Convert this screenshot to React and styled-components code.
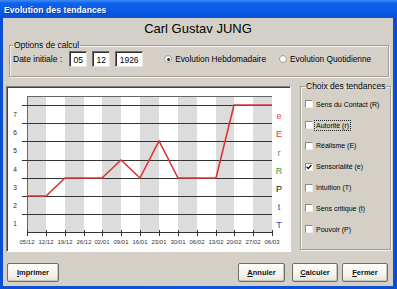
import React from "react";
import styled, { createGlobalStyle } from "styled-components";

const Global = createGlobalStyle`
  html, body { margin: 0; padding: 0; }
  body {
    width: 397px; height: 289px; overflow: hidden;
    font-family: "Liberation Sans", Arial, sans-serif;
    background: #fff;
  }
  * { box-sizing: border-box; }
`;

const Window = styled.div`
  width: 397px;
  height: 289px;
  display: flex;
  flex-direction: column;
  background: linear-gradient(to right, #0a4ed2, #0b55e0 50%, #0a4ed2);
`;

const TitleBar = styled.div`
  height: 18px;
  display: flex;
  align-items: center;
  padding-left: 4px;
  padding-top: 1px;
  color: #fff;
  font-weight: bold;
  font-size: 8.5px;
  letter-spacing: 0.1px;
  background: linear-gradient(to bottom, #3c8cf7 0%, #0f62ec 18%, #0a5ae6 60%, #0a50d8 100%);
  text-shadow: 1px 1px 0 #0a3aa0;
`;

const Client = styled.div`
  flex: 1;
  margin: 0 4px 3px 3px;
  background: #d4d0c8;
  display: flex;
  flex-direction: column;
  color: #000;
`;

const NameRow = styled.div`
  height: 20px;
  display: flex;
  align-items: center;
  justify-content: center;
  font-size: 13px;
  padding-top: 1px;
`;

const Group = styled.fieldset`
  margin: ${(p) => p.$margin};
  padding: ${(p) => p.$padding};
  border: 1px solid #a09d95;
  box-shadow: inset 1px 1px 0 #f4f2ee, 1px 1px 0 #f4f2ee;
  min-width: 0;
  width: ${(p) => p.$width || "auto"};
  height: ${(p) => p.$height || "auto"};
`;

const Legend = styled.legend`
  font-size: 8.5px;
  line-height: 10px;
  padding: 0 1px;
  margin-left: ${(p) => p.$offset || 0}px;
`;

const OptionsRow = styled.div`
  display: flex;
  align-items: center;
  height: 16px;
  font-size: 8.5px;
`;

const FieldLabel = styled.span`
  margin-right: 7px;
`;

const Inputs = styled.div`
  display: flex;
  gap: 5px;
`;

const NumBox = styled.div`
  width: ${(p) => p.$w}px;
  height: 16px;
  background: #fff;
  border: 1px solid;
  border-color: #6e6e6e #e8e6e0 #e8e6e0 #6e6e6e;
  box-shadow: inset 1px 1px 0 #303030;
  display: flex;
  align-items: center;
  justify-content: center;
  font-size: 8.5px;
  padding-top: 1px;
`;

const Radios = styled.div`
  display: flex;
  align-items: center;
  gap: 13px;
  margin-left: 21px;
`;

const RadioItem = styled.label`
  display: flex;
  align-items: center;
  gap: 3px;
  font-size: 8.3px;
`;

const RadioDot = styled.span`
  width: 8px;
  height: 8px;
  border-radius: 50%;
  background: #fff;
  border: 1px solid #9a9a9a;
  display: flex;
  align-items: center;
  justify-content: center;
  &::after {
    content: "";
    width: 3px;
    height: 3px;
    border-radius: 50%;
    background: ${(p) => (p.$on ? "#222" : "transparent")};
  }
`;

const Middle = styled.div`
  display: flex;
  align-items: flex-start;
  margin: 4px 2px 0 3px;
  gap: 9px;
  height: 171px;
`;

const ChartPanel = styled.div`
  margin-top: 5px;
  width: 285px;
  height: 166px;
  background: #fff;
  border: 1px solid;
  border-color: #808080 #fdfdfd #fdfdfd #808080;
  box-shadow: inset 1px 1px 0 #404040;
`;

const CheckList = styled.div`
  display: flex;
  flex-direction: column;
  padding-top: 3px;
`;

const CheckRow = styled.div`
  height: 20.8px;
  display: flex;
  align-items: center;
  gap: 2px;
  font-size: 7px;
`;

const Box = styled.span`
  width: 8px;
  height: 8px;
  background: #fff;
  border: 1px solid;
  border-color: #8a8a8a #eeeeee #eeeeee #8a8a8a;
  display: flex;
  align-items: center;
  justify-content: center;
  flex: none;
`;

const CheckText = styled.span`
  padding: 0 1px;
  line-height: 9px;
  outline: ${(p) => (p.$focus ? "1px dotted #222" : "none")};
`;

const ButtonRow = styled.div`
  display: flex;
  align-items: center;
  margin: 11px 5px 4px 4px;
  height: 19px;
`;

const Spacer = styled.div`
  flex: 1;
`;

const Button = styled.button`
  width: ${(p) => p.$w}px;
  height: 19px;
  margin-left: ${(p) => p.$ml || 0}px;
  padding: 0;
  font-family: "Liberation Sans", Arial, sans-serif;
  font-weight: bold;
  font-size: 7.5px;
  color: #111;
  background: linear-gradient(to bottom, #fefefb, #f2f1ea 70%, #e4e2d8);
  border: 1px solid #6f6e66;
  border-radius: 2px;
  box-shadow: inset -1px -1px 0 #c9c6b8;
  u { text-decoration: underline; }
`;

const xs = Array.from({ length: 14 }, (_, i) => Math.round(27 + i * 18.85));
const dates = ["05/12", "12/12", "19/12", "26/12", "02/01", "09/01", "16/01", "23/01", "30/01", "06/02", "13/02", "20/02", "27/02", "06/03"];
const hLines = [105, 123, 141, 160, 178, 196, 214];
const axisY = 232;
const yBounds = [105, 123, 141, 160, 178, 196, 214, 232];
const rightLabels = [
  ["e", "#e03a3a"],
  ["E", "#e03a3a"],
  ["r", "#3a9a3a"],
  ["R", "#3a9a3a"],
  ["P", "#111"],
  ["t", "#3c3cc0"],
  ["T", "#3c3cc0"],
];
const data = [
  [0, 196], [1, 196], [2, 178], [4, 178], [5, 160], [6, 178],
  [7, 141], [8, 178], [10, 178], [11, 105], [13, 105],
];

function Chart() {
  const pts = data.map(([i, y]) => `${xs[i]},${y}`).join(" ");
  return (
    <svg width="283" height="164" viewBox="7 87 283 164" style={{ display: "block" }}>
      {xs.slice(0, 13).map((x, i) =>
        i % 2 === 0 ? (
          <rect key={i} x={x} y={96} width={xs[i + 1] - x} height={axisY - 96} fill="#dcdcdc" />
        ) : null
      )}
      <line x1={27} y1={96.5} x2={272} y2={96.5} stroke="#666" strokeWidth="1" />
      <line x1={27.5} y1={96} x2={27.5} y2={axisY} stroke="#666" strokeWidth="1" />
      {hLines.map((y) => (
        <line key={y} x1={22} y1={y + 0.5} x2={272} y2={y + 0.5} stroke="#333" strokeWidth="1" />
      ))}
      <line x1={27} y1={axisY + 0.5} x2={272} y2={axisY + 0.5} stroke="#333" strokeWidth="1" />
      {xs.map((x) => (
        <line key={x} x1={x + 0.5} y1={axisY - 2} x2={x + 0.5} y2={axisY + 4} stroke="#333" strokeWidth="1" />
      ))}
      {xs.map((x, i) => (
        <text key={i} x={x} y={244} fontSize="6" fill="#333" textAnchor="middle" fontFamily="Liberation Sans, Arial, sans-serif">
          {dates[i]}
        </text>
      ))}
      {yBounds.slice(0, 7).map((y, i) => (
        <text key={i} x={15} y={(y + yBounds[i + 1]) / 2 + 2.5} fontSize="6.5" fill="#222" textAnchor="middle" fontFamily="Liberation Sans, Arial, sans-serif">
          {7 - i}
        </text>
      ))}
      {rightLabels.map(([t, c], i) => (
        <text key={t} x={279} y={(yBounds[i] + yBounds[i + 1]) / 2 + 5} fontSize="9" fill={c} textAnchor="middle" fontFamily="Liberation Sans, Arial, sans-serif">
          {t}
        </text>
      ))}
      <polyline points={pts} fill="none" stroke="#dc3434" strokeWidth="1.6" strokeLinejoin="miter" />
    </svg>
  );
}

const tendances = [
  { label: "Sens du Contact (R)" },
  { label: "Autorité (r)", focus: true },
  { label: "Réalisme (E)" },
  { label: "Sensorialité (e)", checked: true },
  { label: "Intuition (T)" },
  { label: "Sens critique (t)" },
  { label: "Pouvoir (P)" },
];

export default function App() {
  return (
    <>
      <Global />
      <Window>
        <TitleBar>Evolution des tendances</TitleBar>
        <Client>
          <NameRow>Carl Gustav JUNG</NameRow>
          <Group $margin="2px 4px 0 6px" $padding="1px 4px 9px 3px">
            <Legend $offset={0}>Options de calcul</Legend>
            <OptionsRow>
              <FieldLabel>Date initiale :</FieldLabel>
              <Inputs>
                <NumBox $w={18}>05</NumBox>
                <NumBox $w={18}>12</NumBox>
                <NumBox $w={28}>1926</NumBox>
              </Inputs>
              <Radios>
                <RadioItem>
                  <RadioDot $on />
                  Evolution Hebdomadaire
                </RadioItem>
                <RadioItem>
                  <RadioDot />
                  Evolution Quotidienne
                </RadioItem>
              </Radios>
            </OptionsRow>
          </Group>
          <Middle>
            <ChartPanel>
              <Chart />
            </ChartPanel>
            <Group $margin="0" $padding="0 3px 0 4px" $width="91px" $height="169px">
              <Legend $offset={0}>Choix des tendances</Legend>
              <CheckList>
                {tendances.map((t) => (
                  <CheckRow key={t.label}>
                    <Box>
                      {t.checked && (
                        <svg width="6" height="6" viewBox="0 0 6 6">
                          <path d="M0.6 2.8 L2.3 4.5 L5.4 1" fill="none" stroke="#111" strokeWidth="1.3" />
                        </svg>
                      )}
                    </Box>
                    <CheckText $focus={t.focus}>{t.label}</CheckText>
                  </CheckRow>
                ))}
              </CheckList>
            </Group>
          </Middle>
          <ButtonRow>
            <Button $w={52}>
              <u>I</u>mprimer
            </Button>
            <Spacer />
            <Button $w={47}>
              <u>A</u>nnuler
            </Button>
            <Button $w={46} $ml={7}>
              <u>C</u>alculer
            </Button>
            <Button $w={46} $ml={4}>
              <u>F</u>ermer
            </Button>
          </ButtonRow>
        </Client>
      </Window>
    </>
  );
}
